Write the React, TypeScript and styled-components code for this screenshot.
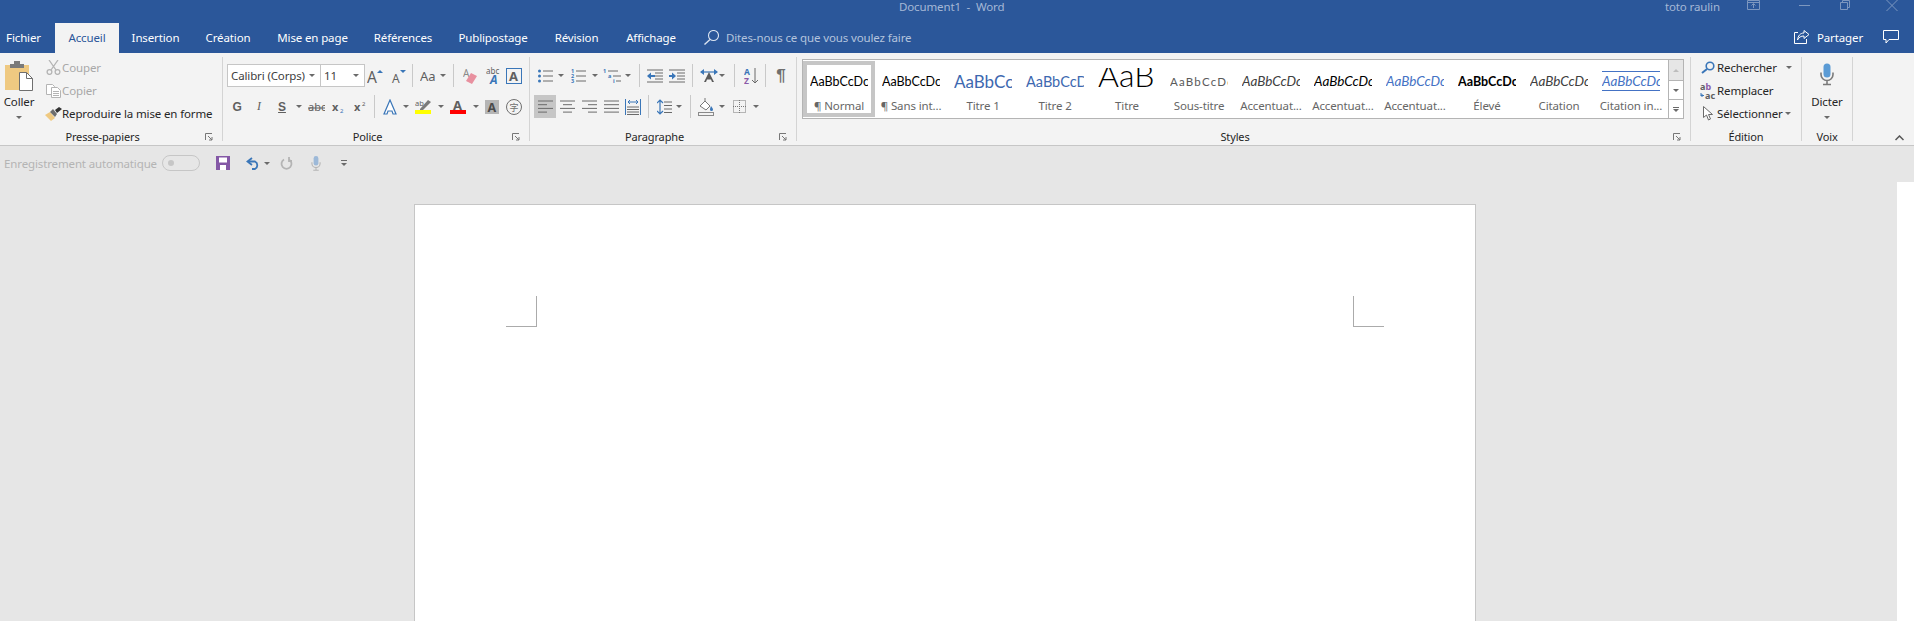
import React from 'react';
import styled, { createGlobalStyle } from 'styled-components';

const UI = '"Noto Sans", "Open Sans", "Liberation Sans", sans-serif';
const BLUE = '#3a76b8';
const GREY = '#5f5f5f';

const Global = createGlobalStyle`
    html, body {
        margin: 0;
        height: 621px;
        overflow: hidden;
        background: #e6e6e6;
        font-family: ${UI};
        font-size: 11.5px;
        letter-spacing: -0.13px;
    }
    #root { height: 100%; }
    svg { display: block; flex: none; letter-spacing: 0; }
`;

const Shell = styled.div`
    display: flex;
    flex-direction: column;
    height: 100%;
`;

/* header */
const Header = styled.header`
    height: 53px;
    background: #2b579a;
    color: #fff;
    display: flex;
    flex-direction: column;
`;

const TitleRow = styled.div`
    height: 23px;
    display: flex;
    padding-left: 899px;
    line-height: 14px;
    color: #a5b8d6;
`;

const DocTitle = styled.div`
    width: 766px;
    white-space: pre;
`;

const UserName = styled.div`
    width: 82px;
`;

const WinBtn = styled.div<{ $ml?: number }>`
    margin-left: ${p => p.$ml ?? 0}px;
    height: 12px;
    display: flex;
`;

const TabRow = styled.nav`
    height: 30px;
    display: flex;
    align-items: stretch;
`;

const Tab = styled.div<{ $w: number; $active?: boolean; $pr?: number }>`
    width: ${p => p.$w}px;
    box-sizing: border-box;
    padding: 0 ${p => p.$pr ?? 0}px 2px 0;
    display: flex;
    align-items: center;
    justify-content: center;
    white-space: nowrap;
    background: ${p => (p.$active ? '#f3f3f3' : 'transparent')};
    color: ${p => (p.$active ? '#2b579a' : '#fff')};
`;

const TellMe = styled.div`
    display: flex;
    align-items: center;
    gap: 7px;
    margin-left: 14px;
    padding-bottom: 2px;
    color: #b4c4dd;
    white-space: nowrap;
`;

const ShareArea = styled.div`
    margin-left: auto;
    padding: 0 15px 2px 0;
    display: flex;
    align-items: center;
`;

const ShareLabel = styled.span`
    margin: 0 20px 0 7px;
`;

/* ribbon */
const Ribbon = styled.section`
    height: 88px;
    padding-top: 4px;
    box-sizing: content-box;
    background: #f3f3f3;
    border-bottom: 1px solid #c6c6c6;
    display: flex;
    align-items: flex-start;
    color: #262626;
`;

const Group = styled.div<{ $w: number }>`
    width: ${p => p.$w}px;
    height: 84px;
    box-sizing: border-box;
    border-right: 1px solid #d4d4d4;
    display: flex;
    flex-direction: column;
    flex: none;
`;

const GroupBody = styled.div`
    flex: 1;
    display: flex;
    min-height: 0;
`;

const GroupFooter = styled.div<{ $launcher: boolean }>`
    height: 12px;
    display: grid;
    grid-template-columns: ${p => (p.$launcher ? '1fr 17px' : '1fr')};
    font-size: 11px;
    line-height: 16px;
    text-align: center;
`;

const Launcher = styled.div`
    height: 16px;
    display: flex;
    align-items: center;
`;

const Rows = styled.div`
    padding: 7px 0 0 4px;
    display: flex;
    flex-direction: column;
    gap: 8px;
`;

const Row = styled.div`
    height: 23px;
    display: flex;
`;

const Btn = styled.div<{ $w: number; $pl?: number; $on?: boolean }>`
    width: ${p => p.$w}px;
    height: 23px;
    box-sizing: border-box;
    padding-left: ${p => p.$pl ?? 0}px;
    display: flex;
    align-items: center;
    justify-content: center;
    flex: none;
    background: ${p => (p.$on ? '#c6c6c6' : 'transparent')};
`;

const Caret = styled.span<{ $up?: boolean; $pale?: boolean }>`
    width: 0;
    height: 0;
    border-left: 3px solid transparent;
    border-right: 3px solid transparent;
    ${p => (p.$up ? 'border-bottom' : 'border-top')}: 3px solid ${p => (p.$pale ? '#bdbdbd' : '#6a6a6a')};
`;

const Sep = styled.div<{ $w: number }>`
    width: ${p => p.$w}px;
    height: 23px;
    flex: none;
    display: flex;
    justify-content: center;
    &::before {
        content: '';
        width: 1px;
        background: #c9c9c9;
    }
`;

const Combo = styled.div<{ $w: number }>`
    width: ${p => p.$w}px;
    height: 23px;
    box-sizing: border-box;
    border: 1px solid #c6c6c6;
    background: #fff;
    display: flex;
    align-items: center;
    justify-content: space-between;
    padding: 0 5px 0 3px;
    margin-right: -1px;
    color: #404040;
    white-space: nowrap;
    flex: none;
`;

/* big button: Coller, Dicter */
const BigBtn = styled.div<{ $w: number }>`
    width: ${p => p.$w}px;
    display: flex;
    flex-direction: column;
    align-items: center;
    flex: none;
`;

const BigIcon = styled.div<{ $center?: boolean }>`
    height: 34px;
    display: flex;
    align-items: ${p => (p.$center ? 'center' : 'flex-end')};
`;

const BigLabel = styled.div`
    line-height: 16px;
    margin-top: 3px;
    margin-bottom: 6px;
`;

const SmallCol = styled.div`
    margin-top: -1px;
    display: flex;
    flex-direction: column;
`;

const SmallItem = styled.div<{ $muted?: boolean; $pl?: number }>`
    height: 23px;
    padding-left: ${p => p.$pl ?? 0}px;
    display: flex;
    align-items: center;
    white-space: nowrap;
    color: ${p => (p.$muted ? '#a8a8a8' : '#262626')};
`;

const ItemIcon = styled.span<{ $w: number }>`
    width: ${p => p.$w}px;
    display: flex;
    flex: none;
    justify-content: center;
`;

const ItemCaret = styled.span<{ $ml: number }>`
    margin-left: ${p => p.$ml}px;
    display: flex;
`;

/* style gallery */
const Gallery = styled.div`
    margin: 2px 0 0 5px;
    width: 882px;
    height: 60px;
    box-sizing: border-box;
    border: 1px solid #b4b4b4;
    background: #fff;
    display: flex;
`;

const StyleCard = styled.div<{ $on?: boolean }>`
    width: 72px;
    height: 56px;
    margin-top: 1px;
    padding-top: 7px;
    box-sizing: border-box;
    flex: none;
    display: flex;
    flex-direction: column;
    align-items: center;
    box-shadow: ${p => (p.$on ? 'inset 0 0 0 4px #c6c6c6' : 'none')};
`;

const Preview = styled.div<{
    $size: number;
    $lh?: number;
    $color?: string;
    $italic?: boolean;
    $bold?: boolean;
    $track?: number;
    $thin?: boolean;
    $lined?: boolean;
}>`
    width: 58px;
    height: ${p => (p.$lined ? 20 : 24)}px;
    margin-top: ${p => (p.$lined ? 3 : 0)}px;
    margin-bottom: ${p => (p.$lined ? 1 : 0)}px;
    overflow: hidden;
    white-space: nowrap;
    box-sizing: border-box;
    border-top: ${p => (p.$lined ? '1px solid #4472c4' : 'none')};
    border-bottom: ${p => (p.$lined ? '1px solid #4472c4' : 'none')};
    font-family: Lato, "Open Sans", sans-serif;
    font-size: ${p => p.$size}px;
    line-height: ${p => p.$lh ?? 27}px;
    color: ${p => p.$color ?? '#000'};
    font-style: ${p => (p.$italic ? 'italic' : 'normal')};
    font-weight: ${p => (p.$bold ? 700 : p.$thin ? 300 : 400)};
    letter-spacing: ${p => p.$track ?? 0}px;
`;

const CardLabel = styled.div`
    margin-top: 6px;
    line-height: 16px;
    color: #666;
    white-space: nowrap;
`;

const ScrollCol = styled.div`
    margin-left: 1px;
    width: 14px;
    border-left: 1px solid #b4b4b4;
    display: flex;
    flex-direction: column;
`;

const ScrollBtn = styled.div<{ $h: number; $off?: boolean }>`
    height: ${p => p.$h}px;
    box-sizing: border-box;
    display: flex;
    flex-direction: column;
    gap: 1px;
    align-items: center;
    justify-content: center;
    background: ${p => (p.$off ? '#e6e6e6' : '#fff')};
    border-bottom: 1px solid #b4b4b4;
    &:last-child { border-bottom: none; }
`;

const MoreLine = styled.span`
    width: 6px;
    height: 1px;
    background: #6a6a6a;
`;

const CollapseArea = styled.div`
    flex: 1;
    height: 84px;
    padding: 0 10px 0 0;
    display: flex;
    align-items: flex-end;
    justify-content: flex-end;
`;

/* quick access */
const Qat = styled.div`
    height: 34px;
    display: flex;
    align-items: center;
`;

const AutoLabel = styled.div`
    width: 158px;
    padding-left: 4px;
    box-sizing: border-box;
    color: #b4b4b4;
    white-space: nowrap;
`;

const Toggle = styled.div`
    width: 38px;
    height: 16px;
    margin-left: 4px;
    box-sizing: border-box;
    border: 1px solid #c6c6c6;
    border-radius: 8px;
    display: flex;
    align-items: center;
    padding-left: 5px;
    &::before {
        content: '';
        width: 6px;
        height: 6px;
        border-radius: 50%;
        background: #c6c6c6;
    }
`;

/* document */
const Workspace = styled.main`
    flex: 1;
    display: flex;
    min-height: 0;
`;

const Page = styled.div`
    width: 1062px;
    margin: 24px 0 0 414px;
    box-sizing: border-box;
    background: #fff;
    border: 1px solid #c6c6c6;
    border-bottom: none;
    padding: 91px 91px 0;
    display: flex;
    justify-content: space-between;
    align-items: flex-start;
`;

const Corner = styled.div<{ $side: 'left' | 'right' }>`
    width: 31px;
    height: 31px;
    box-sizing: border-box;
    border-bottom: 1px solid #ababab;
    border-${p => p.$side}: 1px solid #ababab;
`;

const ScrollTrack = styled.div`
    margin: 2px 0 0 auto;
    width: 17px;
    background: #fff;
`;

/* icons */
const T = styled.text<{ $w?: number }>`
    font-family: ${UI};
    font-weight: ${p => p.$w ?? 400};
`;

const Paste = () => (
    <svg width="28" height="30" viewBox="0 0 28 30">
        <rect x="0" y="4" width="24" height="25" fill="#efc981" />
        <rect x="5" y="3" width="14" height="4" fill="#7a7a7a" />
        <rect x="9" y="0" width="6" height="4" fill="#7a7a7a" />
        <path d="M14.5 11.5h7l6 6v12h-13z" fill="#fff" stroke="#6f6f6f" />
        <path d="M21.5 11.5v6h6" fill="none" stroke="#6f6f6f" />
    </svg>
);

const Scissors = () => (
    <svg width="15" height="15" viewBox="0 0 15 15" fill="none" stroke="#b4b4b4" strokeWidth="1.3">
        <path d="M3 0l7 10M12 0L5 10" />
        <circle cx="3.5" cy="12" r="2.4" />
        <circle cx="11.5" cy="12" r="2.4" />
    </svg>
);

const CopyIco = () => (
    <svg width="15" height="14" viewBox="0 0 15 14" fill="#fff" stroke="#b4b4b4">
        <path d="M.5.5h6l2 2v8h-8z" />
        <path d="M5.5 3.5h6l3 3v7h-9z" />
        <path d="M7 7.5h6M7 9.5h6M7 11.5h6" />
    </svg>
);

const Brush = () => (
    <svg width="17" height="14" viewBox="0 0 17 14">
        <path d="M0 8l5-3 5 6-4 3z" fill="#efc981" />
        <path d="M5 5l3-3 4 5-2 3z" fill="#6d6d6d" />
        <path d="M10 3l4-3 3 2-5 4z" fill="#333" />
    </svg>
);

const FontGrow = () => (
    <svg width="18" height="18" viewBox="0 0 18 18">
        <T x="0" y="16" fontSize="15.5" fill={GREY}>A</T>
        <path d="M10 6l3-3 3 3z" fill={BLUE} />
    </svg>
);

const FontShrink = () => (
    <svg width="16" height="18" viewBox="0 0 16 18">
        <T x="1" y="16" fontSize="12" fill={GREY}>A</T>
        <path d="M9 3h6l-3 3z" fill={BLUE} />
    </svg>
);

const CaseIco = () => (
    <svg width="17" height="16" viewBox="0 0 17 16">
        <T x="0" y="13" fontSize="13" fill={GREY}>Aa</T>
    </svg>
);

const Eraser = () => (
    <svg width="15" height="16" viewBox="0 0 15 16">
        <T x="0" y="9" fontSize="10" fill="#8a8a8a">A</T>
        <path d="M8 5l6 3-5 8-6-3z" fill="#e8909f" />
    </svg>
);

const AbcStyle = () => (
    <svg width="15" height="18" viewBox="0 0 15 18">
        <T x="0" y="7" fontSize="8" fill={GREY}>abc</T>
        <T x="4" y="17" fontSize="12" fill={BLUE} $w={700} fontStyle="italic">A</T>
    </svg>
);

const BoxA = () => (
    <svg width="16" height="16" viewBox="0 0 16 16">
        <rect x=".5" y=".5" width="15" height="15" fill="none" stroke={BLUE} />
        <T x="3" y="13" fontSize="13" fill={GREY} $w={700}>A</T>
    </svg>
);

const Letter = styled.span<{ $italic?: boolean; $under?: boolean; $serif?: boolean }>`
    font-family: ${p => (p.$serif ? '"Liberation Serif", serif' : '"Liberation Sans", sans-serif')};
    font-size: 12px;
    font-weight: ${p => (p.$italic ? 400 : 700)};
    font-style: ${p => (p.$italic ? 'italic' : 'normal')};
    text-decoration: ${p => (p.$under ? 'underline' : 'none')};
    color: ${GREY};
`;

const Strike = () => (
    <svg width="17" height="12" viewBox="0 0 17 12">
        <T x="0" y="10" fontSize="11" fill={GREY}>abc</T>
        <path d="M0 7h17" stroke={GREY} />
    </svg>
);

const Script = ({ sup }: { sup?: boolean }) => (
    <svg width="13" height="14" viewBox="0 0 13 14">
        <T x="0" y="11" fontSize="11" fill={GREY} $w={700}>x</T>
        <T x="8" y={sup ? 6 : 13} fontSize="6" fill={sup ? GREY : BLUE}>2</T>
    </svg>
);

const EffectA = () => (
    <svg width="16" height="16" viewBox="0 0 16 16">
        <path d="M8 1l6 14h-3l-1-3H6l-1 3H2z" fill="#fff" stroke={BLUE} strokeWidth="1.2" />
    </svg>
);

const Highlight = () => (
    <svg width="16" height="15" viewBox="0 0 16 15">
        <T x="0" y="7" fontSize="7.5" fill={GREY}>ab</T>
        <path d="M5 10l8-9 3 2-8 8-3 0z" fill="#7a7a7a" />
        <rect x="0" y="11" width="16" height="4" fill="#ffff00" />
    </svg>
);

const FontColor = () => (
    <svg width="16" height="15" viewBox="0 0 16 15">
        <T x="3" y="11" fontSize="13" fill={GREY} $w={700}>A</T>
        <rect x="0" y="11" width="16" height="4" fill="#f00" />
    </svg>
);

const ShadedA = () => (
    <svg width="14" height="14" viewBox="0 0 14 14">
        <rect width="14" height="14" fill="#b5b5b5" />
        <T x="2.5" y="12" fontSize="12.5" fill="#4a4a4a" $w={700}>A</T>
    </svg>
);

const Enclosed = () => (
    <svg width="16" height="16" viewBox="0 0 16 16">
        <circle cx="8" cy="8" r="7.5" fill="none" stroke="#6f6f6f" />
        <text x="3.5" y="12" fontSize="9" fill="#6f6f6f" fontFamily='"Noto Sans CJK SC", sans-serif'>字</text>
    </svg>
);

const Bullets = () => (
    <svg width="15" height="14" viewBox="0 0 15 14">
        {[2, 7, 12].map(y => (
            <React.Fragment key={y}>
                <circle cx="1.5" cy={y} r="1.5" fill={BLUE} />
                <path d={`M5 ${y}h10`} stroke="#6a6a6a" />
            </React.Fragment>
        ))}
    </svg>
);

const Numbering = () => (
    <svg width="15" height="15" viewBox="0 0 15 15">
        {['1', '2', '3'].map((n, i) => (
            <React.Fragment key={n}>
                <T x="0" y={5 + i * 5} fontSize="5.5" fill={BLUE} $w={700}>{n}</T>
                <path d={`M5 ${3 + i * 5}h10`} stroke="#6a6a6a" />
            </React.Fragment>
        ))}
    </svg>
);

const MultiLevel = () => (
    <svg width="18" height="15" viewBox="0 0 18 15">
        <T x="0" y="5" fontSize="5.5" fill={BLUE} $w={700}>1</T>
        <path d="M5 3h10" stroke="#6a6a6a" />
        <T x="5" y="10" fontSize="5.5" fill={BLUE} $w={700}>a</T>
        <path d="M10 8h8" stroke="#6a6a6a" />
        <T x="10" y="15" fontSize="5.5" fill={BLUE} $w={700}>i</T>
        <path d="M13 13h5" stroke="#6a6a6a" />
    </svg>
);

const Indent = ({ inc }: { inc?: boolean }) => (
    <svg width="16" height="14" viewBox="0 0 16 14">
        <path d="M0 1h16M0 13h16" stroke="#6a6a6a" />
        <path d="M8 4h8M8 7h8M8 10h8" stroke="#6a6a6a" />
        <path d={inc ? 'M0 7h4' : 'M3 7h5'} stroke={BLUE} strokeWidth="2" />
        <path d={inc ? 'M3 3.5L7 7l-4 3.5z' : 'M4 3.5L0 7l4 3.5z'} fill={BLUE} />
    </svg>
);

const Asian = () => (
    <svg width="18" height="14" viewBox="0 0 18 14">
        <path d="M1 3h16" stroke={BLUE} strokeWidth="1.2" />
        <path d="M4 0L0 3l4 3zM14 0l4 3-4 3z" fill={BLUE} />
        <path d="M9 3l5 10h-2l-1-2.5H7L6 13H4z" fill="#5a5a5a" />
    </svg>
);

const SortAz = () => (
    <svg width="15" height="16" viewBox="0 0 15 16">
        <T x="0" y="7" fontSize="8.5" fill={BLUE} $w={700}>A</T>
        <T x="0" y="15.5" fontSize="8.5" fill="#8a5aa8" $w={700}>Z</T>
        <path d="M11 0v15M8 12l3 3 3-3" fill="none" stroke="#6a6a6a" />
    </svg>
);

const Pilcrow = styled.span`
    font-family: "Liberation Sans", sans-serif;
    font-size: 17px;
    font-weight: 700;
    color: #6f6f6f;
`;

const Align = ({ kind }: { kind: 'left' | 'center' | 'right' | 'full' }) => {
    const rows = kind === 'full' ? [15, 15, 15, 15] : [15, 9, 15, 9];
    return (
        <svg width="15" height="13" viewBox="0 0 15 13">
            {rows.map((w, i) => {
                const x = kind === 'center' ? (15 - w) / 2 : kind === 'right' ? 15 - w : 0;
                return <path key={i} d={`M${x} ${1 + i * 3.7}h${w}`} stroke="#6a6a6a" />;
            })}
        </svg>
    );
};

const Distribute = () => (
    <svg width="16" height="16" viewBox="0 0 16 16">
        <path d="M.5 0v16M15.5 0v16" stroke={BLUE} />
        <path d="M3 3h10M3 3l2-2M3 3l2 2M13 3l-2-2M13 3l-2 2" fill="none" stroke={BLUE} />
        <path d="M2 8h12M2 10.5h12M2 13h12M2 15.5h12" stroke="#6a6a6a" />
    </svg>
);

const LineSpacing = () => (
    <svg width="15" height="16" viewBox="0 0 15 16">
        <path d="M3 1v14M0 4l3-3 3 3M0 12l3 3 3-3" fill="none" stroke={BLUE} strokeWidth="1.2" />
        <path d="M7 3h8M7 6.5h8M7 10h8M7 13.5h8" stroke="#6a6a6a" />
    </svg>
);

const Shading = () => (
    <svg width="16" height="18" viewBox="0 0 16 18">
        <path d="M2 8l5-5 5 5-4 4z" fill="#fff" stroke="#777" />
        <path d="M7 3V0" stroke="#777" />
        <path d="M13 8c1 1.500 2 2.500 2 3.500a1.500 1.500 0 0 1-3 0c0-1 .5-2 1-3.500z" fill={BLUE} />
        <rect x=".5" y="14.500" width="15" height="3" fill="none" stroke="#8a8a8a" />
    </svg>
);

const Borders = () => (
    <svg width="13" height="13" viewBox="0 0 13 13">
        <rect x=".5" y=".5" width="12" height="12" fill="none" stroke="#777" strokeDasharray="1 1" />
        <path d="M6.500 0v13M0 6.500h13" stroke="#777" strokeDasharray="1 1" />
    </svg>
);

const Find = () => (
    <svg width="14" height="13" viewBox="0 0 14 13" fill="none">
        <circle cx="9" cy="5" r="3.800" stroke={BLUE} strokeWidth="1.600" />
        <path d="M6 8l-5 4" stroke={BLUE} strokeWidth="2" />
    </svg>
);

const Replace = () => (
    <svg width="16" height="16" viewBox="0 0 16 16">
        <T x="0" y="7" fontSize="9" fill={GREY} $w={700}>a</T>
        <T x="5.500" y="7" fontSize="9" fill="#8a5aa8" $w={700}>b</T>
        <T x="5" y="15.500" fontSize="9" fill={GREY} $w={700}>ac</T>
        <path d="M1 10v2.500h3M2.500 14L1 12.500 2.500 11" fill="none" stroke={BLUE} />
    </svg>
);

const Pointer = () => (
    <svg width="10" height="15" viewBox="0 0 10 15">
        <path d="M.5.500v11l3-2.500 2 5 2-1-2-4.500h4z" fill="#fff" stroke="#6a6a6a" />
    </svg>
);

const Mic = ({ small }: { small?: boolean }) => (
    <svg width={small ? 10 : 14} height={small ? 15 : 23} viewBox="0 0 14 22">
        <rect x="3.500" y="0" width="7" height="14" rx="3.500" fill={small ? '#9db9d8' : '#5b9bd5'} />
        <path d="M1 9v2a6 6 0 0 0 12 0V9M7 17v4M3 21h8" fill="none" stroke={small ? '#b5b5b5' : '#7a7a7a'} strokeWidth="1.600" />
    </svg>
);

const LauncherIco = () => (
    <svg width="8" height="8" viewBox="0 0 8 8" fill="none" stroke="#777">
        <path d="M.5 7V.5H7" />
        <path d="M3 3l4 4M7 4v3H4" />
    </svg>
);

const Save = () => (
    <svg width="14" height="14" viewBox="0 0 14 14">
        <rect width="14" height="14" fill="#8458a6" />
        <rect x="3" y="1.500" width="8" height="5" fill="#fff" />
        <rect x="4" y="9" width="6" height="5" fill="#fff" />
    </svg>
);

const Undo = () => (
    <svg width="15" height="13" viewBox="0 0 15 13" fill="none" stroke={BLUE} strokeWidth="1.800">
        <path d="M6 1L1.500 4.500 6 8" />
        <path d="M2 4.500h7a4.200 4.200 0 0 1 0 7.500H6" />
    </svg>
);

const Redo = () => (
    <svg width="13" height="13" viewBox="0 0 13 13" fill="none" stroke="#b4b4b4" strokeWidth="1.800">
        <path d="M4 2.500a5 5 0 1 0 5 0" />
        <path d="M9 0v4h3" />
    </svg>
);

const Customize = () => (
    <svg width="6" height="7" viewBox="0 0 6 7">
        <path d="M0 .5h6" stroke="#6a6a6a" />
        <path d="M0 3h6L3 6z" fill="#6a6a6a" />
    </svg>
);

const SearchLight = () => (
    <svg width="15" height="15" viewBox="0 0 15 15" fill="none" stroke="#dbe4f1" strokeWidth="1.100">
        <circle cx="9.500" cy="5.500" r="5" />
        <path d="M6 9.500L.5 14.500" strokeWidth="1.400" />
    </svg>
);

const Share = () => (
    <svg width="16" height="14" viewBox="0 0 16 14" fill="none" stroke="#fff">
        <path d="M4 2.500H.5v11h12V9" />
        <path d="M10 .5l5 4-5 4V6C7 6 5 7 3.500 10 4 6 6 3 10 3z" />
    </svg>
);

const Comment = () => (
    <svg width="16" height="14" viewBox="0 0 16 14" fill="none" stroke="#fff">
        <path d="M.5.500h15v9H6l-3 3.500v-3.500H.5z" />
    </svg>
);

const RibbonMode = () => (
    <svg width="13" height="10" viewBox="0 0 13 10" fill="none" stroke="#7d97bf">
        <path d="M.5.500h12v9H.5zM.5 2.500h12M6.500 8V4M4.500 5.500l2-2 2 2" />
    </svg>
);

const Minimize = () => (
    <svg width="11" height="10" viewBox="0 0 11 10">
        <path d="M0 5.500h11" stroke="#7d97bf" />
    </svg>
);

const Restore = () => (
    <svg width="10" height="10" viewBox="0 0 10 10" fill="none" stroke="#7d97bf">
        <path d="M.5 2.500h7v7h-7zM2.500 2.500v-2h7v7h-2" />
    </svg>
);

const CloseIco = () => (
    <svg width="12" height="11" viewBox="0 0 12 11" stroke="#7d97bf">
        <path d="M.5 0l11 11M11.500 0L.5 11" />
    </svg>
);

const Chevron = () => (
    <svg width="9" height="6" viewBox="0 0 9 6" fill="none" stroke="#555" strokeWidth="1.500">
        <path d="M.5 5l4-4 4 4" />
    </svg>
);

const tabs = [
    { label: 'Fichier', w: 55, pr: 8 },
    { label: 'Accueil', w: 64, active: true },
    { label: 'Insertion', w: 73 },
    { label: 'Création', w: 72 },
    { label: 'Mise en page', w: 97 },
    { label: 'Références', w: 84 },
    { label: 'Publipostage', w: 96 },
    { label: 'Révision', w: 71 },
    { label: 'Affichage', w: 78 },
];

const ITALIC = 13.5;
const PREVIEW = 'AaBbCcDc';

const styleCards = [
    { label: '¶ Normal', on: true, size: 12.5 },
    { label: '¶ Sans int...', size: 12.5 },
    { label: 'Titre 1', size: 17, color: '#3d68b0' },
    { label: 'Titre 2', size: 14.5, color: '#3d68b0' },
    { label: 'Titre', size: 32, lh: 14, thin: true, text: 'AaB' },
    { label: 'Sous-titre', size: 11.5, color: '#5a5a5a', track: 1.2, text: 'AaBbCcDd' },
    { label: 'Accentuat...', size: ITALIC, italic: true, color: '#404040' },
    { label: 'Accentuat...', size: ITALIC, italic: true },
    { label: 'Accentuat...', size: ITALIC, italic: true, color: '#4472c4' },
    { label: 'Élevé', size: 12.5, bold: true },
    { label: 'Citation', size: ITALIC, italic: true, color: '#404040' },
    { label: 'Citation in...', size: ITALIC, italic: true, color: '#4472c4', lined: true },
];

function RibbonGroup({ w, label, launcher, children }: { w: number; label: string; launcher?: boolean; children: React.ReactNode }) {
    return (
        <Group $w={w}>
            <GroupBody>{children}</GroupBody>
            <GroupFooter $launcher={!!launcher}>
                <span>{label}</span>
                {launcher && (
                    <Launcher>
                        <LauncherIco />
                    </Launcher>
                )}
            </GroupFooter>
        </Group>
    );
}

const CaretBtn = ({ w }: { w: number }) => (
    <Btn $w={w}>
        <Caret />
    </Btn>
);

export default function App() {
    return (
        <Shell>
            <Global />
            <Header>
                <TitleRow>
                    <DocTitle>Document1  -  Word</DocTitle>
                    <UserName>toto raulin</UserName>
                    <WinBtn><RibbonMode /></WinBtn>
                    <WinBtn $ml={39}><Minimize /></WinBtn>
                    <WinBtn $ml={30}><Restore /></WinBtn>
                    <WinBtn $ml={36}><CloseIco /></WinBtn>
                </TitleRow>
                <TabRow>
                    {tabs.map(t => (
                        <Tab key={t.label} $w={t.w} $active={t.active} $pr={t.pr}>{t.label}</Tab>
                    ))}
                    <TellMe>
                        <SearchLight />
                        Dites-nous ce que vous voulez faire
                    </TellMe>
                    <ShareArea>
                        <Share />
                        <ShareLabel>Partager</ShareLabel>
                        <Comment />
                    </ShareArea>
                </TabRow>
            </Header>

            <Ribbon>
                <RibbonGroup w={223} label="Presse-papiers" launcher>
                    <BigBtn $w={38}>
                        <BigIcon><Paste /></BigIcon>
                        <BigLabel>Coller</BigLabel>
                        <Caret />
                    </BigBtn>
                    <SmallCol>
                        <SmallItem $muted $pl={6}><ItemIcon $w={18}><Scissors /></ItemIcon>Couper</SmallItem>
                        <SmallItem $muted $pl={6}><ItemIcon $w={18}><CopyIco /></ItemIcon>Copier</SmallItem>
                        <SmallItem $pl={6}><ItemIcon $w={18}><Brush /></ItemIcon>Reproduire la mise en forme</SmallItem>
                    </SmallCol>
                </RibbonGroup>

                <RibbonGroup w={307} label="Police" launcher>
                    <Rows>
                        <Row>
                            <Combo $w={94}>Calibri (Corps)<Caret /></Combo>
                            <Combo $w={45}>11<Caret /></Combo>
                            <Btn $w={24}><FontGrow /></Btn>
                            <Btn $w={22}><FontShrink /></Btn>
                            <Sep $w={5} />
                            <Btn $w={36}><CaseIco />&nbsp;<Caret /></Btn>
                            <Sep $w={5} />
                            <Btn $w={28}><Eraser /></Btn>
                            <Btn $w={19}><AbcStyle /></Btn>
                            <Btn $w={22}><BoxA /></Btn>
                        </Row>
                        <Row>
                            <Btn $w={20}><Letter>G</Letter></Btn>
                            <Btn $w={24}><Letter $italic $serif>I</Letter></Btn>
                            <Btn $w={22}><Letter $under>S</Letter></Btn>
                            <CaretBtn w={11} />
                            <Btn $w={24}><Strike /></Btn>
                            <Btn $w={20}><Script /></Btn>
                            <Btn $w={24}><Script sup /></Btn>
                            <Sep $w={5} />
                            <Btn $w={25}><EffectA /></Btn>
                            <CaretBtn w={7} />
                            <Btn $w={28}><Highlight /></Btn>
                            <CaretBtn w={7} />
                            <Btn $w={28}><FontColor /></Btn>
                            <CaretBtn w={7} />
                            <Btn $w={26}><ShadedA /></Btn>
                            <Btn $w={18}><Enclosed /></Btn>
                        </Row>
                    </Rows>
                </RibbonGroup>

                <RibbonGroup w={267} label="Paragraphe" launcher>
                    <Rows>
                        <Row>
                            <Btn $w={22}><Bullets /></Btn>
                            <CaretBtn w={10} />
                            <Btn $w={24}><Numbering /></Btn>
                            <CaretBtn w={10} />
                            <Btn $w={24}><MultiLevel /></Btn>
                            <CaretBtn w={7} />
                            <Sep $w={16} />
                            <Btn $w={16}><Indent /></Btn>
                            <Btn $w={28}><Indent inc /></Btn>
                            <Sep $w={3} />
                            <Btn $w={24} $pl={6}><Asian /></Btn>
                            <CaretBtn w={8} />
                            <Sep $w={16} />
                            <Btn $w={19}><SortAz /></Btn>
                            <Sep $w={8} />
                            <Btn $w={24}><Pilcrow>¶</Pilcrow></Btn>
                        </Row>
                        <Row>
                            <Btn $w={22} $on><Align kind="left" /></Btn>
                            <Btn $w={22}><Align kind="center" /></Btn>
                            <Btn $w={22}><Align kind="right" /></Btn>
                            <Btn $w={22}><Align kind="full" /></Btn>
                            <Btn $w={22}><Distribute /></Btn>
                            <Sep $w={8} />
                            <Btn $w={24}><LineSpacing /></Btn>
                            <CaretBtn w={6} />
                            <Sep $w={16} />
                            <Btn $w={16}><Shading /></Btn>
                            <CaretBtn w={16} />
                            <Btn $w={19}><Borders /></Btn>
                            <CaretBtn w={14} />
                        </Row>
                    </Rows>
                </RibbonGroup>

                <RibbonGroup w={894} label="Styles" launcher>
                    <Gallery>
                        {styleCards.map((c, i) => (
                            <StyleCard key={i} $on={c.on}>
                                <Preview
                                    $size={c.size}
                                    $lh={c.lined ? 18 : c.lh}
                                    $color={c.color}
                                    $italic={c.italic}
                                    $bold={c.bold}
                                    $track={c.track}
                                    $thin={c.thin}
                                    $lined={c.lined}
                                >
                                    {c.text ?? PREVIEW}
                                </Preview>
                                <CardLabel>{c.label}</CardLabel>
                            </StyleCard>
                        ))}
                        <ScrollCol>
                            <ScrollBtn $h={21} $off><Caret $up $pale /></ScrollBtn>
                            <ScrollBtn $h={19}><Caret /></ScrollBtn>
                            <ScrollBtn $h={18}><MoreLine /><Caret /></ScrollBtn>
                        </ScrollCol>
                    </Gallery>
                </RibbonGroup>

                <RibbonGroup w={111} label="Édition">
                    <SmallCol>
                        <SmallItem $pl={7}>
                            <ItemIcon $w={19}><Find /></ItemIcon>Rechercher<ItemCaret $ml={9}><Caret /></ItemCaret>
                        </SmallItem>
                        <SmallItem $pl={7}>
                            <ItemIcon $w={19}><Replace /></ItemIcon>Remplacer
                        </SmallItem>
                        <SmallItem $pl={7}>
                            <ItemIcon $w={19}><Pointer /></ItemIcon>Sélectionner<ItemCaret $ml={2}><Caret /></ItemCaret>
                        </SmallItem>
                    </SmallCol>
                </RibbonGroup>

                <RibbonGroup w={51} label="Voix">
                    <BigBtn $w={50}>
                        <BigIcon $center><Mic /></BigIcon>
                        <BigLabel>Dicter</BigLabel>
                        <Caret />
                    </BigBtn>
                </RibbonGroup>

                <CollapseArea>
                    <Chevron />
                </CollapseArea>
            </Ribbon>

            <Qat>
                <AutoLabel>Enregistrement automatique</AutoLabel>
                <Toggle />
                <Btn $w={46}><Save /></Btn>
                <Btn $w={15}><Undo /></Btn>
                <CaretBtn w={12} />
                <Btn $w={27}><Redo /></Btn>
                <Btn $w={32}><Mic small /></Btn>
                <Btn $w={24}><Customize /></Btn>
            </Qat>

            <Workspace>
                <Page>
                    <Corner $side="right" />
                    <Corner $side="left" />
                </Page>
                <ScrollTrack />
            </Workspace>
        </Shell>
    );
}
